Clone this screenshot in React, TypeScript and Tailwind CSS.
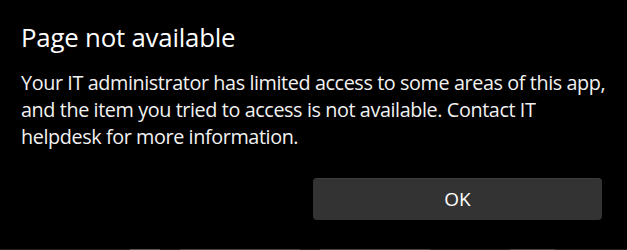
export default function App() {
  return (
    <div className="w-[627px] h-[250px] bg-black text-white flex flex-col overflow-hidden font-['Open_Sans',sans-serif]">
      <div className="flex-1 flex flex-col px-[21px] pt-[20px]">
        <h1 className="text-[25.8px] leading-[34px] font-normal tracking-[-0.2px]">Page not available</h1>
        <p className="mt-[15px] text-[19.8px] leading-[27px] text-[#f2f2f2] tracking-[-0.4px]">
          Your IT administrator has limited access to some areas of this app,
          <br />
          and the item you tried to access is not available. Contact IT
          <br />
          helpdesk for more information.
        </p>
        <div className="flex justify-end mt-auto mb-[29px] pr-[4px]">
          <button className="w-[289px] h-[42px] rounded-[4px] bg-[#333333] border-t border-[#3d3d3d] text-[19px] text-white">
            OK
          </button>
        </div>
      </div>
      <div className="h-px bg-[#222222] flex gap-[20px] pl-[130px]">
        <span className="w-[30px] bg-[#555]" />
        <span className="w-[120px] bg-[#444]" />
        <span className="w-[110px] bg-[#444]" />
        <span className="w-[45px] ml-[60px] bg-[#444]" />
      </div>
    </div>
  );
}
